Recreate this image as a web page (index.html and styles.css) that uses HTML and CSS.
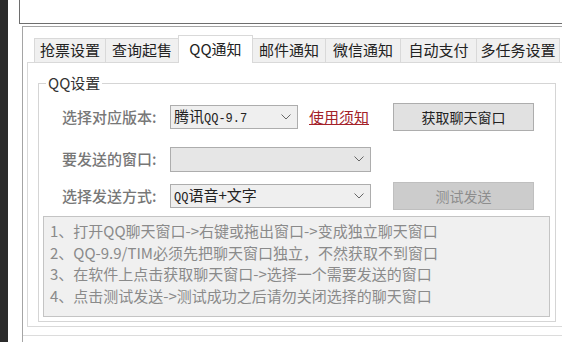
FILE: index.html
```html
<!DOCTYPE html>
<html>
<head lang="zh">
    <meta charset="UTF-8">
    <title>QQ通知</title>
    <link rel="stylesheet" href="styles.css">
</head>
<body>
    <div class="side"></div>
    <div class="win">
        <div class="topbox"></div>
        <div class="panel">
            <div class="tabs">
                <div class="tab">抢票设置</div>
                <div class="tab">查询起售</div>
                <div class="tab active">QQ通知</div>
                <div class="tab">邮件通知</div>
                <div class="tab">微信通知</div>
                <div class="tab">自动支付</div>
                <div class="tab last">多任务设置</div>
            </div>
            <div class="page">
                <fieldset class="group">
                    <legend>QQ设置</legend>
                    <div class="row r1">
                        <span class="label">选择对应版本:</span>
                        <div class="combo c1">
                            <span>腾讯<span class="mono">QQ-9.7</span></span>
                            <svg width="10" height="6" viewBox="0 0 10 6"><path d="M0.5 0.5 L5 5 L9.5 0.5" fill="none" stroke="#666" stroke-width="1"/></svg>
                        </div>
                        <a class="link" href="#">使用须知</a>
                        <button class="btn">获取聊天窗口</button>
                    </div>
                    <div class="row r2">
                        <span class="label">要发送的窗口:</span>
                        <div class="combo c2 empty">
                            <span></span>
                            <svg width="10" height="6" viewBox="0 0 10 6"><path d="M0.5 0.5 L5 5 L9.5 0.5" fill="none" stroke="#666" stroke-width="1"/></svg>
                        </div>
                    </div>
                    <div class="row r3">
                        <span class="label">选择发送方式:</span>
                        <div class="combo c2">
                            <span><span class="mono">QQ</span>语音+文字</span>
                            <svg width="10" height="6" viewBox="0 0 10 6"><path d="M0.5 0.5 L5 5 L9.5 0.5" fill="none" stroke="#666" stroke-width="1"/></svg>
                        </div>
                        <button class="btn off">测试发送</button>
                    </div>
                    <div class="info">
                        <p>1、打开QQ聊天窗口-&gt;右键或拖出窗口-&gt;变成独立聊天窗口</p>
                        <p>2、QQ-9.9/TIM必须先把聊天窗口独立，不然获取不到窗口</p>
                        <p>3、在软件上点击获取聊天窗口-&gt;选择一个需要发送的窗口</p>
                        <p>4、点击测试发送-&gt;测试成功之后请勿关闭选择的聊天窗口</p>
                    </div>
                </fieldset>
            </div>
            <div class="footer"></div>
        </div>
    </div>
</body>
</html>
```
FILE: styles.css
```css
* {
    margin: 0;
    padding: 0;
    box-sizing: border-box;
}
body {
    display: flex;
    height: 342px;
    overflow: hidden;
    background-color: #fff;
    font-family: "Noto Sans CJK SC", "Microsoft YaHei", sans-serif;
    font-size: 15px;
    color: #333;
}
.side {
    flex: none;
    width: 8px;
    background-color: #2b2b2b;
}
.win {
    flex: 1;
    min-width: 0;
    padding-left: 11px;
}
.topbox {
    height: 24px;
    border: 1px solid #6e6e6e;
    border-top: none;
    border-right: none;
}
.panel {
    margin: 2px 0 0 3px;
    height: 316px;
    padding: 8px 0 0 4px;
    border: 1px solid #a5a5a5;
    border-right: none;
    border-bottom: none;
}
.tabs {
    display: flex;
    align-items: flex-end;
    height: 27px;
    padding-left: 7px;
    position: relative;
    z-index: 1;
}
.tab {
    flex: none;
    height: 24px;
    line-height: 22px;
    text-align: center;
    background-color: #f0f0f0;
    border-left: 1px solid #d9d9d9;
    border-top: 1px solid #d9d9d9;
    color: #222;
}
.tab:nth-child(1) { width: 71px; }
.tab:nth-child(2) { width: 73px; }
.tab:nth-child(3) { width: 75px; }
.tab:nth-child(4) { width: 72px; }
.tab:nth-child(5) { width: 75px; }
.tab:nth-child(6) { width: 76px; }
.tab:nth-child(7) { width: 84px; }
.tab.last {
    border-right: 1px solid #d9d9d9;
}
.tab.active {
    height: 28px;
    margin-bottom: -1px;
    line-height: 25px;
    background-color: #fff;
    border-right: 1px solid #d9d9d9;
}
.tab.active + .tab {
    border-left: none;
}
.page {
    padding: 10px 0 4px 10px;
    border: 1px solid #d9d9d9;
    border-right: none;
    background-color: #fff;
}
.group {
    width: 518px;
    padding: 0 0 4px 0;
    border: 1px solid #d5d5d5;
}
.group legend {
    margin-left: 7px;
    padding: 0 2px;
    line-height: 20px;
    color: #333;
}
.row {
    display: flex;
    align-items: center;
    height: 28px;
    padding-left: 23px;
}
.r1 { margin-top: 10px; }
.r2 { margin-top: 14px; }
.r3 { margin-top: 9px; }
.label {
    width: 108px;
    line-height: 20px;
    color: #777;
    font-weight: 500;
}
.combo {
    display: flex;
    align-items: center;
    justify-content: space-between;
    height: 24px;
    padding: 0 6px 0 3px;
    border: 1px solid #adadad;
    background-color: #efefef;
    line-height: 20px;
    color: #222;
}
.c1 { width: 128px; }
.c2 { width: 201px; }
.combo.empty {
    height: 25px;
    background-color: #e6e6e6;
}
.mono {
    font-family: "Liberation Mono", monospace;
    font-size: 12px;
}
.link {
    width: 60px;
    margin-left: 11px;
    line-height: 20px;
    color: #a3222a;
    text-decoration: underline;
}
.btn {
    width: 141px;
    height: 28px;
    margin-left: 24px;
    border: 1px solid #adadad;
    background-color: #e1e1e1;
    font: inherit;
    font-size: 14px;
    color: #222;
}
.btn.off {
    margin-left: 22px;
    border-color: #bfbfbf;
    background-color: #cccccc;
    color: #8d8d8d;
}
.info {
    height: 101px;
    margin: 6px 5px 0 4px;
    padding: 3px 0 0 6px;
    border: 1px solid #c4c4c4;
    background-color: #f0f0f0;
    line-height: 21.5px;
    color: #8a8a8a;
}
.footer {
    margin: 8px 0 0 -4px;
    border-top: 1px solid #dcdcdc;
}
```
